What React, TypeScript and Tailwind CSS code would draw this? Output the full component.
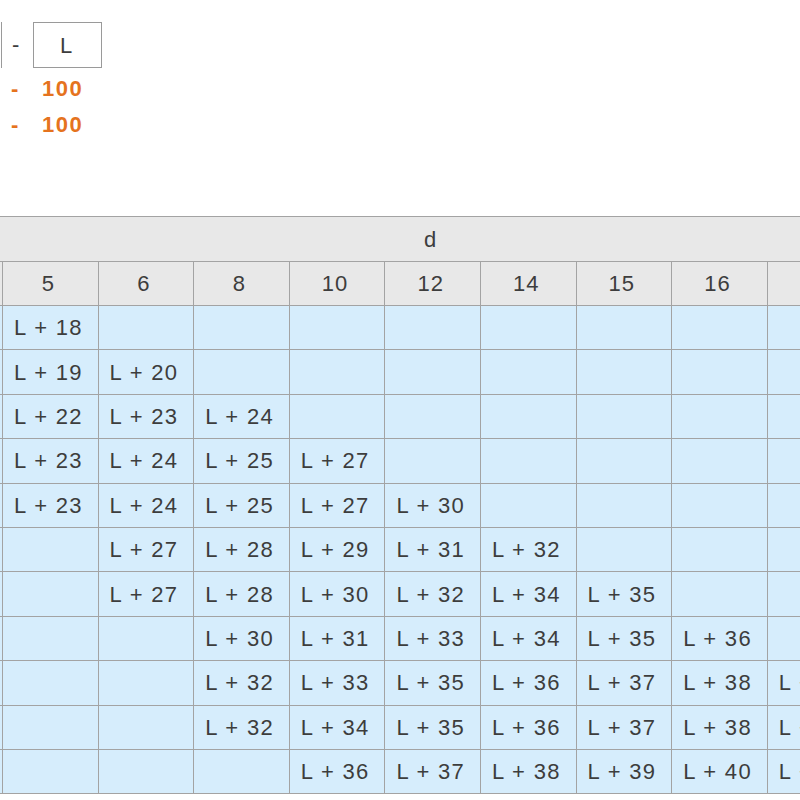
import React from 'react';

const cols = ['5', '6', '8', '10', '12', '14', '15', '16', '18'];

// each row: values per column, '' = empty cell
const rows: string[][] = [
  ['18', '', '', '', '', '', '', '', ''],
  ['19', '20', '', '', '', '', '', '', ''],
  ['22', '23', '24', '', '', '', '', '', ''],
  ['23', '24', '25', '27', '', '', '', '', ''],
  ['23', '24', '25', '27', '30', '', '', '', ''],
  ['', '27', '28', '29', '31', '32', '', '', ''],
  ['', '27', '28', '30', '32', '34', '35', '', ''],
  ['', '', '30', '31', '33', '34', '35', '36', ''],
  ['', '', '32', '33', '35', '36', '37', '38', '40'],
  ['', '', '32', '34', '35', '36', '37', '38', '40'],
  ['', '', '', '36', '37', '38', '39', '40', '42'],
];

export default function App() {
  return (
    <div className="w-[800px] h-[800px] overflow-hidden bg-white text-[#3d3d3d] font-['Liberation_Sans',Arial,sans-serif]">
      {/* length inputs */}
      <div className="h-[216px] pt-[22px]">
        <div className="flex items-center h-[46px]">
          <div className="w-[2px] h-full border-r border-[#9a9a9a]"></div>
          <span className="ml-[10px] w-[21px] text-[22px] leading-none">-</span>
          <div className="w-[69px] h-[46px] border border-[#9a9a9a] flex items-center justify-center text-[22px] pr-[3px]">L</div>
        </div>
        <div className="mt-[2px] flex items-center h-[36px] pl-[11px] text-[#e5731e] font-bold text-[22px] tracking-[1.5px]">
          <span className="w-[31px]">-</span>
          <span>100</span>
        </div>
        <div className="flex items-center h-[36px] pl-[11px] text-[#e5731e] font-bold text-[22px] tracking-[1.5px]">
          <span className="w-[31px]">-</span>
          <span>100</span>
        </div>
      </div>

      {/* dimension table */}
      <div className="-ml-[40px] w-max border-t border-[#a3a3a3] text-[22px]">
        <div className="flex h-[45px] bg-[#e8e8e8] border-b border-[#a3a3a3]">
          <div className="w-[43px] shrink-0"></div>
          <div className="w-[860.4px] shrink-0 flex items-center justify-center pr-[6px]">d</div>
        </div>
        <div className="flex h-[44px] bg-[#e8e8e8] border-b border-[#a3a3a3]">
          <div className="w-[43px] shrink-0 border-r border-[#a3a3a3]"></div>
          {cols.map((c) => (
            <div key={c} className="w-[95.6px] shrink-0 border-r border-[#a3a3a3] flex items-center justify-center pr-[4px] tracking-[1px]">
              {c}
            </div>
          ))}
        </div>
        {rows.map((r, i) => (
          <div key={i} className="flex h-[44.4px] bg-[#d6edfc] border-b border-[#a3a3a3]">
            <div className="w-[43px] shrink-0 border-r border-[#a3a3a3]"></div>
            {r.map((v, j) => (
              <div key={j} className="w-[95.6px] shrink-0 border-r border-[#a3a3a3] flex items-center pl-[11px] tracking-[1.3px] whitespace-nowrap">
                {v ? `L + ${v}` : ''}
              </div>
            ))}
          </div>
        ))}
      </div>
    </div>
  );
}
